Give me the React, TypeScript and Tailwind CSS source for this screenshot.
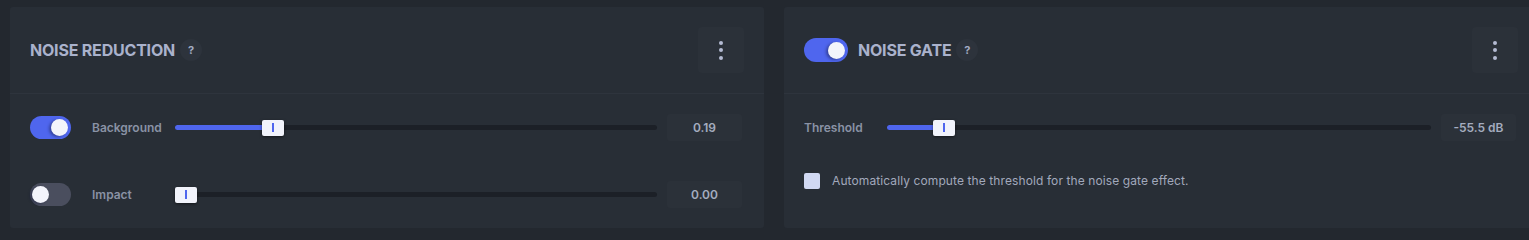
import { useState } from "react";

/* ─── small bits ─────────────────────────────────────────────────────────── */
function Toggle({ on, wide }: { on: boolean; wide?: boolean }) {
  return (
    <div
      className={`relative flex items-center rounded-full shrink-0 ${wide ? "w-[44px] h-[24px]" : "w-[41px] h-[23px]"} ${
        on ? "bg-[#4f66ee] justify-end pr-[3px]" : "bg-[#4a4e5e] justify-start pl-[2px]"
      }`}
    >
      <span className="block w-[17px] h-[17px] rounded-full bg-[#f3f4fb] shadow-[-2px_1px_3px_rgba(20,24,60,0.45)]" />
    </div>
  );
}

function Help() {
  return (
    <span className="ml-[5px] flex items-center justify-center w-[22px] h-[22px] rounded-full bg-[#2d333c] text-[11px] font-bold text-[#a3abc2]">
      ?
    </span>
  );
}

function Kebab() {
  return (
    <button className="flex flex-col items-center justify-center gap-[3.5px] w-[46px] h-[46px] rounded-[4px] bg-[#2b3139]">
      <span className="w-[4px] h-[4px] rounded-full bg-[#b4bbd3]" />
      <span className="w-[4px] h-[4px] rounded-full bg-[#b4bbd3]" />
      <span className="w-[4px] h-[4px] rounded-full bg-[#b4bbd3]" />
    </button>
  );
}

function Slider({ value }: { value: number }) {
  return (
    <div className="relative flex-1 h-[16px] flex items-center">
      <div className="w-full h-[5px] rounded-full bg-[#1c2027]" />
      <div
        className="absolute left-0 h-[5px] rounded-full bg-[#4f66ee]"
        style={{ width: `calc(${value} * (100% - 22px) + 11px)` }}
      />
      <div
        className="absolute top-0 w-[22px] h-[16px] rounded-[2px] bg-[#f1f3fb] shadow-[0_1px_3px_rgba(0,0,0,0.5)] flex items-center justify-center"
        style={{ left: `calc(${value} * (100% - 22px))` }}
      >
        <span className="block w-[2px] h-[9px] bg-[#4f66ee]" />
      </div>
    </div>
  );
}

function Row({ toggle, label, value, shown }: { toggle?: boolean; label: string; value: number; shown: string }) {
  return (
    <div className="flex items-center h-[27px]">
      {toggle !== undefined && (
        <div className="w-[62px] shrink-0">
          <Toggle on={toggle} />
        </div>
      )}
      <span className="w-[83px] shrink-0 text-[12px] font-semibold text-[#8a92a5]">{label}</span>
      <Slider value={value} />
      <div className="ml-[10px] w-[75px] h-[27px] shrink-0 rounded-[3px] bg-[#2b3139] flex items-center justify-center text-[12px] font-semibold text-[#a4acbf]">
        {shown}
      </div>
    </div>
  );
}

function Card({ title, toggle, children }: { title: string; toggle?: boolean; children: React.ReactNode }) {
  return (
    <section className="w-[754px] shrink-0 rounded-[3px] bg-[#282e36]">
      <header className="h-[87px] flex items-center justify-between pl-[20px] pr-[20px] border-b border-[#2e343d]">
        <div className="flex items-center">
          {toggle !== undefined && (
            <div className="mr-[10px]">
              <Toggle on={toggle} wide />
            </div>
          )}
          <h2 className="text-[16px] font-bold text-[#aab2cc] tracking-[-0.2px]">{title}</h2>
          <Help />
        </div>
        <Kebab />
      </header>
      <div className="pl-[20px] pr-[22px] pt-[20px] pb-[20px]">{children}</div>
    </section>
  );
}

/* ─── page ───────────────────────────────────────────────────────────────── */
export default function App() {
  const [auto] = useState(false);
  return (
    <div
      className="w-full h-[240px] overflow-hidden bg-[#23282f]"
      style={{ fontFamily: "Inter, 'Noto Sans', sans-serif" }}
    >
      <div className="flex gap-[20px] pl-[10px] pt-[7px]">
        <Card title="NOISE REDUCTION">
          <div className="flex flex-col gap-[40px]">
            <Row toggle={true} label="Background" value={0.19} shown="0.19" />
            <Row toggle={false} label="Impact" value={0} shown="0.00" />
          </div>
        </Card>

        <Card title="NOISE GATE" toggle={true}>
          <div className="flex flex-col">
            <Row label="Threshold" value={0.088} shown="-55.5 dB" />
            <label className="mt-[31px] flex items-center gap-[12px]">
              <span
                className={`block w-[16px] h-[16px] rounded-[2px] ${auto ? "bg-[#4f66ee]" : "bg-[#d1d9f3]"}`}
              />
              <span className="text-[12px] tracking-[0.1px] text-[#a2a9bc]">
                Automatically compute the threshold for the noise gate effect.
              </span>
            </label>
          </div>
        </Card>
      </div>
    </div>
  );
}
